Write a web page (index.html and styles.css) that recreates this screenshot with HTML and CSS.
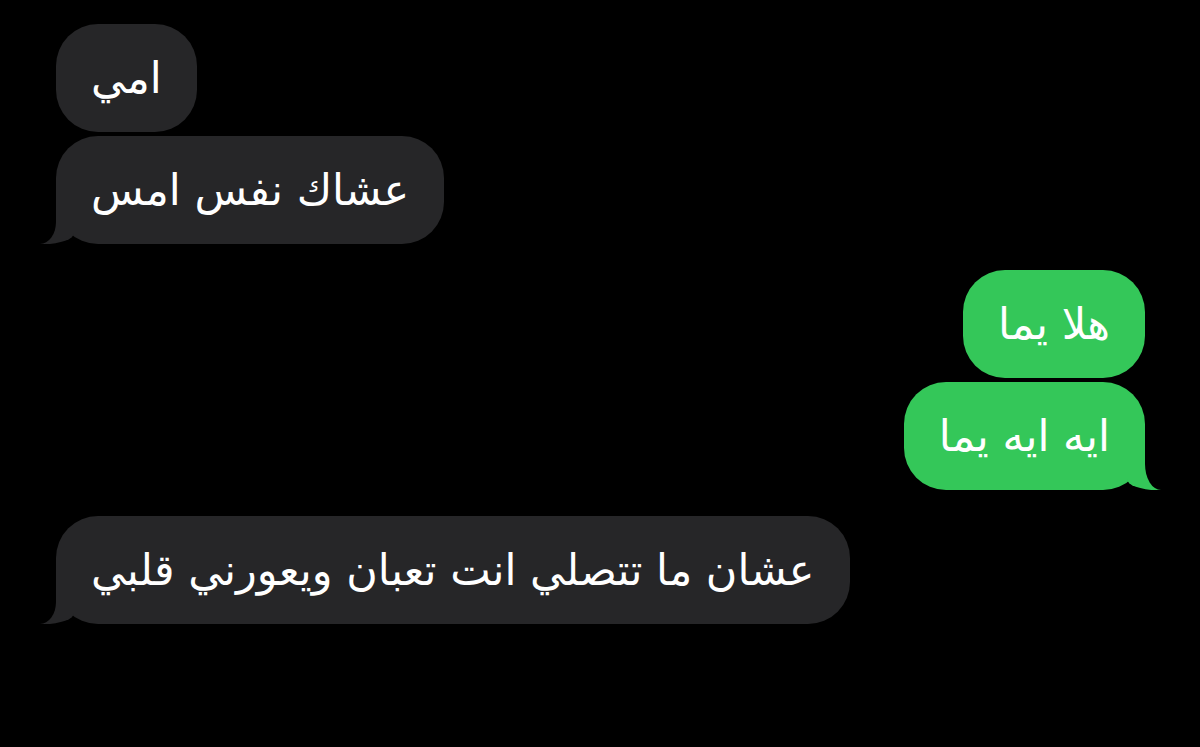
FILE: index.html
```html
<!DOCTYPE html>
<html lang="ar">
<head>
  <meta charset="UTF-8">
  <meta name="viewport" content="width=device-width, initial-scale=1.0">
  <title>Messages</title>
  <link rel="stylesheet" href="styles.css">
</head>
<body>
  <div class="thread">
    <!-- from mum -->
    <div class="group them">
      <div class="bubble" dir="rtl">امي</div>
      <div class="bubble tail" dir="rtl">عشاك نفس امس</div>
    </div>

    <!-- me -->
    <div class="group me">
      <div class="bubble" dir="rtl">هلا يما</div>
      <div class="bubble tail" dir="rtl">ايه ايه يما</div>
    </div>

    <div class="group them">
      <div class="bubble tail" dir="rtl">عشان ما تتصلي انت تعبان ويعورني قلبي</div>
    </div>
  </div>
</body>
</html>
```

FILE: styles.css
```css
/* General styles */
body {
  margin: 0;
  height: 100vh;
  background-color: #000;
  font-family: 'DejaVu Sans', 'Noto Sans', sans-serif;
  color: #fff;
  overflow: hidden;
}

.thread {
  display: flex;
  flex-direction: column;
  gap: 26px;
  padding: 24px 55px 0 56px;
}

.group {
  display: flex;
  flex-direction: column;
  gap: 4px;
}

.group.them {
  align-items: flex-start;
}

.group.me {
  align-items: flex-end;
}

/* Bubble styling */
.bubble {
  position: relative;
  box-sizing: border-box;
  height: 108px;
  display: flex;
  align-items: center;
  padding: 0 35px;
  border-radius: 42px;
  font-size: 43px;
  line-height: 1;
  white-space: nowrap;
}

.them .bubble {
  background-color: #262628;
}

.me .bubble {
  background-color: #34c759;
}

/* iMessage style tail: coloured flare, then a black cut-out on top */
.bubble.tail::before,
.bubble.tail::after {
  content: "";
  position: absolute;
  bottom: 0;
  height: 42px;
}

.them .bubble.tail::before {
  left: -16px;
  width: 34px;
  background-color: #262628;
  border-bottom-right-radius: 30px 11px;
}

.them .bubble.tail::after {
  left: -40px;
  width: 40px;
  background-color: #000;
  border-bottom-right-radius: 16px 22px;
}

.me .bubble.tail::before {
  right: -16px;
  width: 34px;
  background-color: #34c759;
  border-bottom-left-radius: 30px 11px;
}

.me .bubble.tail::after {
  right: -40px;
  width: 40px;
  background-color: #000;
  border-bottom-left-radius: 16px 26px;
}
```
